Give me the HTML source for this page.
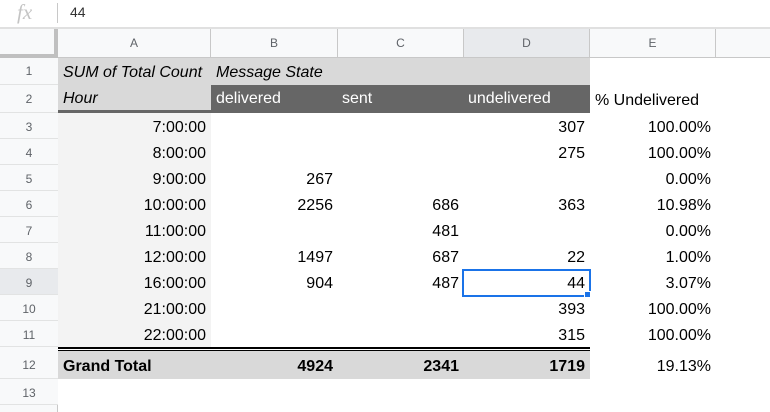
<!DOCTYPE html>
<html><head><style>
*{margin:0;padding:0;box-sizing:border-box}
body{width:770px;height:412px;overflow:hidden;background:#fff;font-family:"Liberation Sans",Arial,sans-serif;position:relative}
div{position:absolute}
.t{font-size:16px;color:#000;line-height:26px;white-space:nowrap}
.r{text-align:right}
.rh{left:0;width:58px;background:#f8f9fa;border-bottom:1px solid #e2e3e3;font-size:12px;color:#5f6368;text-align:center}
.ch{top:29px;height:28px;background:#f8f9fa;border-right:1px solid #c8c8c8;font-size:12px;color:#5f6368;text-align:center;line-height:28px}
</style></head><body>
<div style="left:0;top:0;width:770px;height:28px;background:#fff;border-bottom:1px solid #e0e0e0"></div>
<div style="left:17px;top:0;font-family:'Liberation Serif',serif;font-style:italic;font-size:21px;color:#c4c4c4;line-height:24px">fx</div>
<div style="left:57px;top:3px;width:1px;height:20px;background:#c8c8c8"></div>
<div style="left:70px;top:0;font-size:14px;color:#333;line-height:24px">44</div>
<div style="left:0;top:28px;width:770px;height:30px;background:#f8f9fa;border-bottom:1px solid #c8c8c8;border-top:1px solid #e0e0e0"></div>
<div style="left:0;top:29px;width:58px;height:29px;border-right:4px solid #c0c0c0;border-bottom:4px solid #c0c0c0;background:#f8f9fa"></div>
<div class="ch" style="left:58px;width:153px">A</div>
<div class="ch" style="left:211px;width:127px">B</div>
<div class="ch" style="left:338px;width:126px">C</div>
<div class="ch" style="left:464px;width:126px;background:#e8eaed">D</div>
<div class="ch" style="left:590px;width:126px">E</div>
<div style="left:0;top:58px;width:58px;height:354px;background:#f8f9fa;border-right:1px solid #c8c8c8"></div>
<div class="rh" style="top:58px;height:27px;line-height:27px">1</div>
<div class="rh" style="top:85px;height:28px;line-height:28px">2</div>
<div class="rh" style="top:113px;height:26px;line-height:28px">3</div>
<div class="rh" style="top:139px;height:26px;line-height:28px">4</div>
<div class="rh" style="top:165px;height:26px;line-height:28px">5</div>
<div class="rh" style="top:191px;height:26px;line-height:28px">6</div>
<div class="rh" style="top:217px;height:26px;line-height:28px">7</div>
<div class="rh" style="top:243px;height:26px;line-height:28px">8</div>
<div class="rh" style="top:269px;height:26px;line-height:28px;background:#e8eaed">9</div>
<div class="rh" style="top:295px;height:26px;line-height:28px">10</div>
<div class="rh" style="top:321px;height:26px;line-height:28px">11</div>
<div class="rh" style="top:347px;height:32px;line-height:36px">12</div>
<div class="rh" style="top:379px;height:26px;line-height:28px">13</div>
<div style="left:58px;top:58px;width:532px;height:27px;background:#d9d9d9"></div>
<div style="left:58px;top:85px;width:153px;height:28px;background:#d9d9d9;border-bottom:3px solid #666"></div>
<div style="left:211px;top:85px;width:379px;height:28px;background:#666"></div>
<div style="left:58px;top:113px;width:153px;height:234px;background:#f3f3f3"></div>
<div style="left:58px;top:347px;width:532px;height:4px;border-top:2px solid #000;border-bottom:1px solid #000;background:#fff"></div>
<div style="left:58px;top:351px;width:532px;height:28px;background:#d9d9d9"></div>
<div class="t" style="left:63px;top:60px;font-style:italic">SUM of Total Count</div>
<div class="t" style="left:216px;top:60px;font-style:italic">Message State</div>
<div class="t" style="left:63px;top:86px;font-style:italic">Hour</div>
<div class="t" style="left:216px;top:86px;color:#fff">delivered</div>
<div class="t" style="left:342px;top:86px;color:#fff">sent</div>
<div class="t" style="left:468px;top:86px;color:#fff">undelivered</div>
<div class="t" style="left:595px;top:88px">% Undelivered</div>
<div style="left:58px;top:115px">
<div class="t r" style="left:0;top:0;width:148px">7:00:00</div>
<div class="t r" style="left:0;top:26px;width:148px">8:00:00</div>
<div class="t r" style="left:0;top:52px;width:148px">9:00:00</div>
<div class="t r" style="left:0;top:78px;width:148px">10:00:00</div>
<div class="t r" style="left:0;top:104px;width:148px">11:00:00</div>
<div class="t r" style="left:0;top:130px;width:148px">12:00:00</div>
<div class="t r" style="left:0;top:156px;width:148px">16:00:00</div>
<div class="t r" style="left:0;top:182px;width:148px">21:00:00</div>
<div class="t r" style="left:0;top:208px;width:148px">22:00:00</div>
<div class="t r" style="left:153px;top:52px;width:122px">267</div>
<div class="t r" style="left:153px;top:78px;width:122px">2256</div>
<div class="t r" style="left:153px;top:130px;width:122px">1497</div>
<div class="t r" style="left:153px;top:156px;width:122px">904</div>
<div class="t r" style="left:280px;top:78px;width:121px">686</div>
<div class="t r" style="left:280px;top:104px;width:121px">481</div>
<div class="t r" style="left:280px;top:130px;width:121px">687</div>
<div class="t r" style="left:280px;top:156px;width:121px">487</div>
<div class="t r" style="left:406px;top:0;width:121px">307</div>
<div class="t r" style="left:406px;top:26px;width:121px">275</div>
<div class="t r" style="left:406px;top:78px;width:121px">363</div>
<div class="t r" style="left:406px;top:130px;width:121px">22</div>
<div class="t r" style="left:406px;top:156px;width:121px">44</div>
<div class="t r" style="left:406px;top:182px;width:121px">393</div>
<div class="t r" style="left:406px;top:208px;width:121px">315</div>
<div class="t r" style="left:532px;top:0;width:121px">100.00%</div>
<div class="t r" style="left:532px;top:26px;width:121px">100.00%</div>
<div class="t r" style="left:532px;top:52px;width:121px">0.00%</div>
<div class="t r" style="left:532px;top:78px;width:121px">10.98%</div>
<div class="t r" style="left:532px;top:104px;width:121px">0.00%</div>
<div class="t r" style="left:532px;top:130px;width:121px">1.00%</div>
<div class="t r" style="left:532px;top:156px;width:121px">3.07%</div>
<div class="t r" style="left:532px;top:182px;width:121px">100.00%</div>
<div class="t r" style="left:532px;top:208px;width:121px">100.00%</div>
</div>
<div class="t" style="left:63px;top:354px;font-weight:bold">Grand Total</div>
<div class="t r" style="left:211px;top:354px;width:122px;font-weight:bold">4924</div>
<div class="t r" style="left:338px;top:354px;width:121px;font-weight:bold">2341</div>
<div class="t r" style="left:464px;top:354px;width:121px;font-weight:bold">1719</div>
<div class="t r" style="left:590px;top:354px;width:121px">19.13%</div>
<div style="left:462px;top:269px;width:129px;height:28px;border:2px solid #1a73e8"></div>
<div style="left:584px;top:291px;width:7px;height:7px;background:#1a73e8;border:1px solid #fff"></div>
</body></html>
